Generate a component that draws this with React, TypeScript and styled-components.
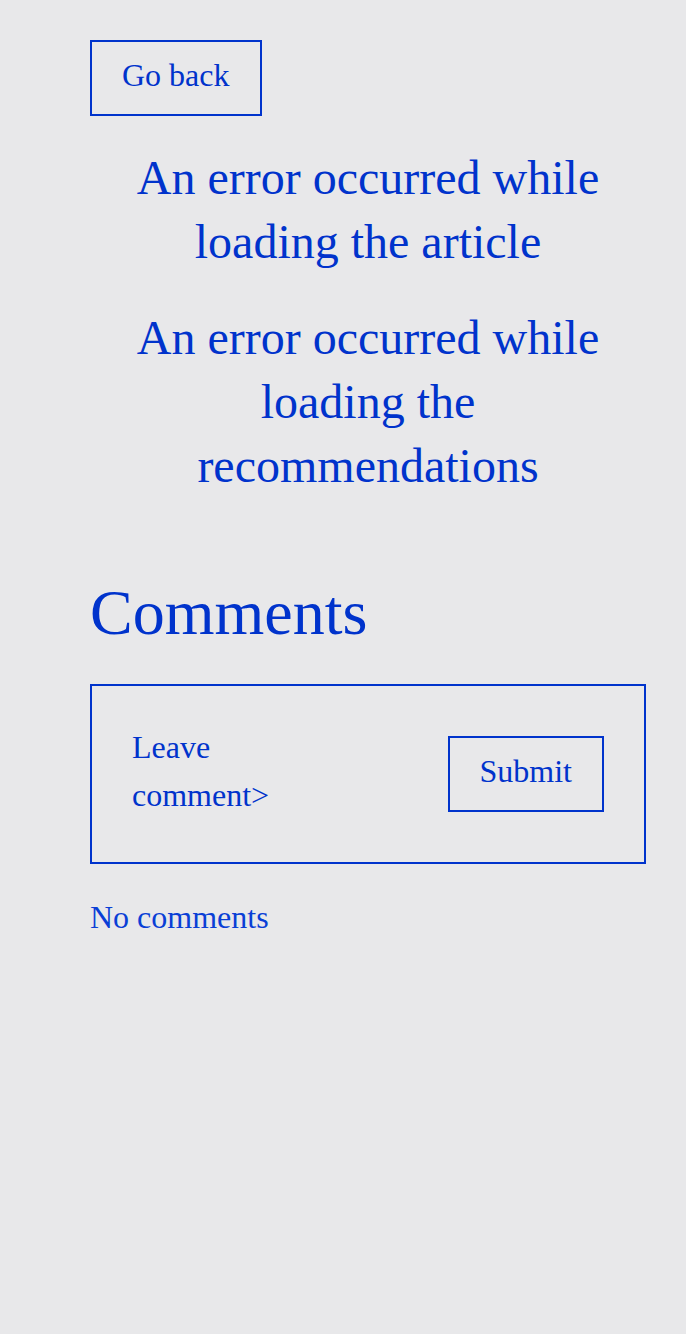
import React from "react";
import styled, { createGlobalStyle } from "styled-components";

const Global = createGlobalStyle`
  html, body {
    margin: 0;
    padding: 0;
    background: #e8e8ea;
  }
  body {
    font-family: "Liberation Serif", "Times New Roman", serif;
    color: #0033cc;
  }
`;

const Page = styled.main`
  min-height: 1334px;
  box-sizing: border-box;
  padding: 40px 40px 40px 90px;
  display: flex;
  flex-direction: column;
  align-items: stretch;
`;

const Button = styled.button`
  font-family: "Liberation Serif", "Times New Roman", serif;
  font-size: 32px;
  line-height: 36px;
  color: #0033cc;
  background: transparent;
  border: 2px solid #0033cc;
  padding: 15px 30px 21px;
  cursor: pointer;
  flex: none;
`;

const BackButton = styled(Button)`
  align-self: flex-start;
`;

const SubmitButton = styled(Button)`
  margin-top: 6px;
`;

const ErrorText = styled.h1`
  margin: 30px 0 0;
  font-size: 48px;
  line-height: 64px;
  font-weight: 400;
  text-align: center;
  & + & {
    margin-top: 32px;
  }
`;

const SectionTitle = styled.h2`
  margin: 78px 0 0;
  font-size: 64px;
  line-height: 74px;
  font-weight: 400;
`;

const CommentForm = styled.form`
  margin-top: 34px;
  border: 2px solid #0033cc;
  padding: 37px 40px 43px;
  display: flex;
  align-items: center;
  justify-content: space-between;
  gap: 24px;
`;

const CommentInput = styled.div`
  max-width: 180px;
  font-size: 32px;
  line-height: 48px;
`;

const EmptyNote = styled.p`
  margin: 29px 0 0;
  font-size: 32px;
  line-height: 48px;
  color: #0a3fd6;
`;

export default function App() {
  return (
    <>
      <Global />
      <Page>
        <BackButton type="button">Go back</BackButton>
        <ErrorText>An error occurred while loading the article</ErrorText>
        <ErrorText>An error occurred while loading the recommendations</ErrorText>
        <SectionTitle>Comments</SectionTitle>
        <CommentForm onSubmit={(e) => e.preventDefault()}>
          <CommentInput>Leave comment&gt;</CommentInput>
          <SubmitButton type="submit">Submit</SubmitButton>
        </CommentForm>
        <EmptyNote>No comments</EmptyNote>
      </Page>
    </>
  );
}
